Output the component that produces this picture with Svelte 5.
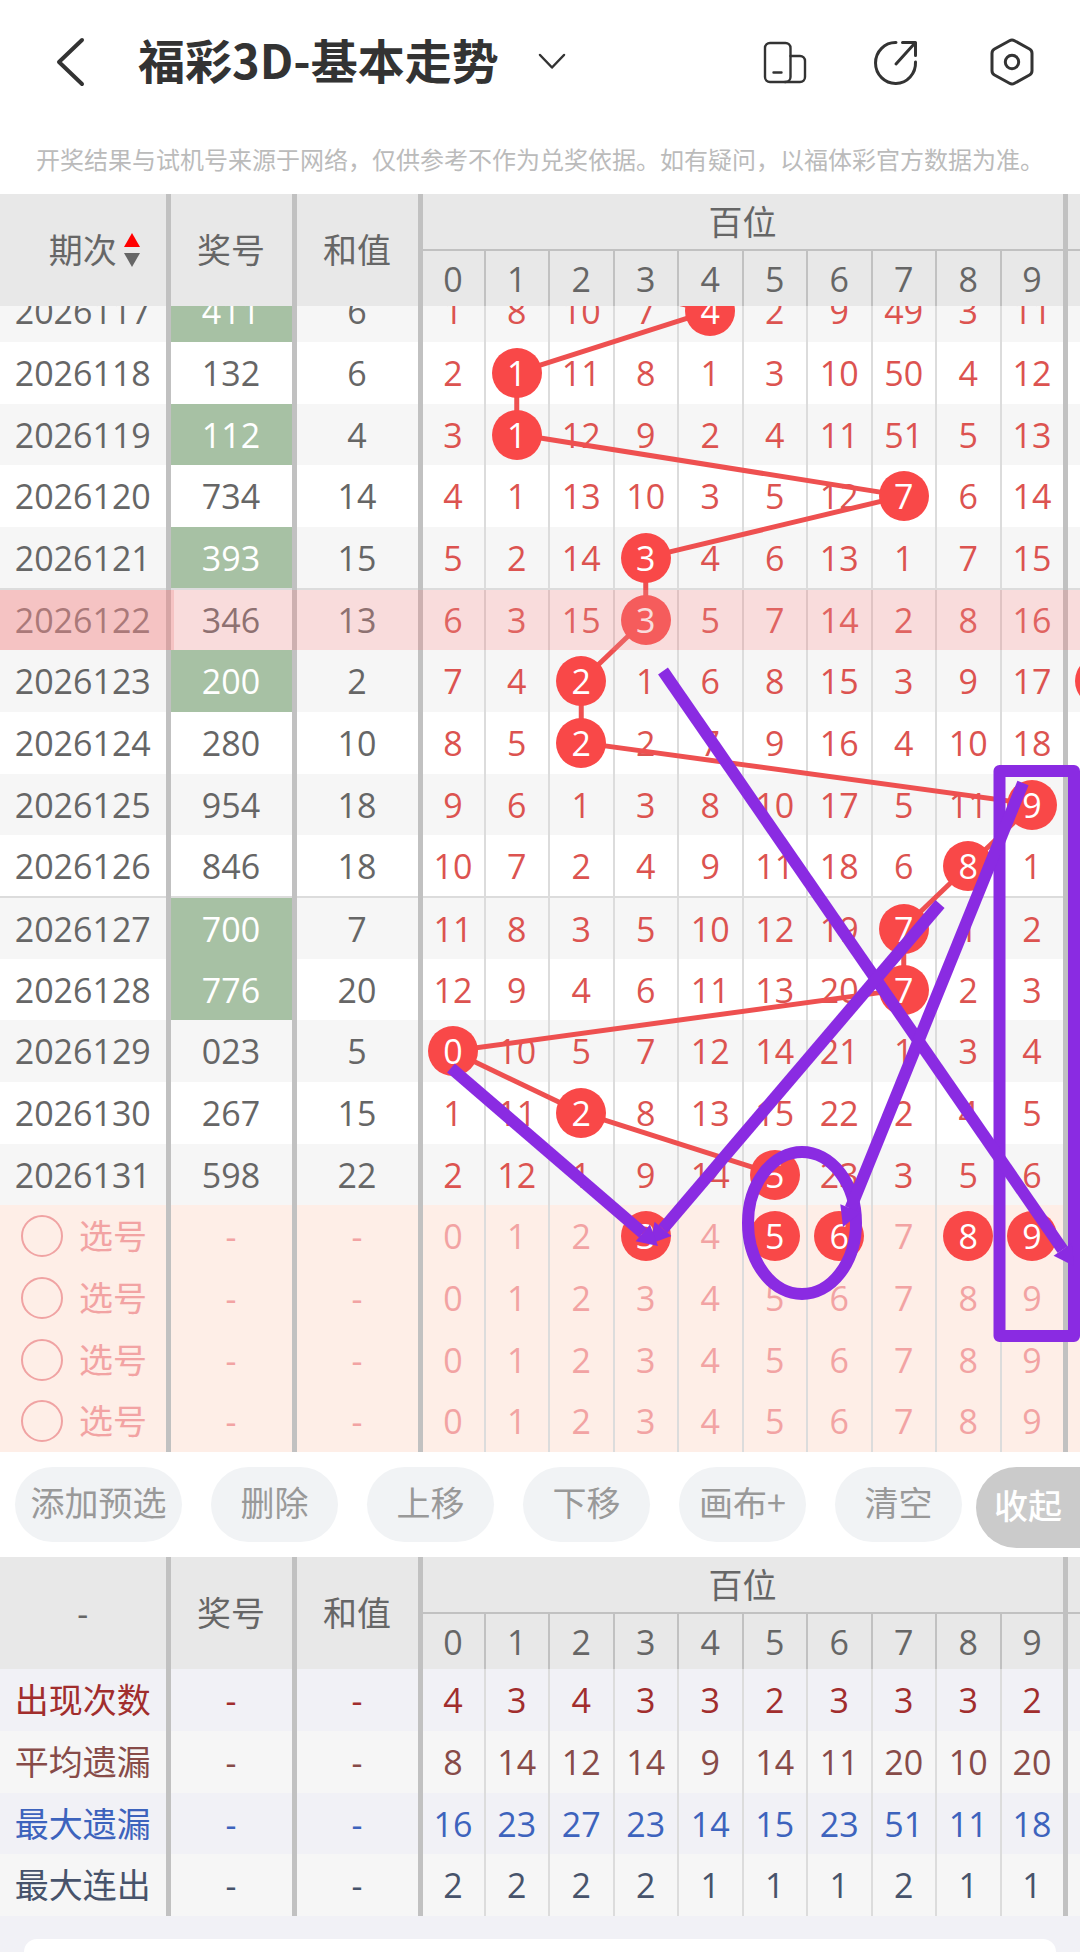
<script>
	const digits = [0, 1, 2, 3, 4, 5, 6, 7, 8, 9];

	// hit is the digit drawn, gaps the omission count of every column
	const rows = [
		{ no: "2026117", code: "411", sum: 6, hit: 4, gaps: [1, 8, 10, 7, 4, 2, 9, 49, 3, 11] },
		{ no: "2026118", code: "132", sum: 6, hit: 1, gaps: [2, 1, 11, 8, 1, 3, 10, 50, 4, 12] },
		{ no: "2026119", code: "112", sum: 4, hit: 1, gaps: [3, 1, 12, 9, 2, 4, 11, 51, 5, 13] },
		{ no: "2026120", code: "734", sum: 14, hit: 7, gaps: [4, 1, 13, 10, 3, 5, 12, 7, 6, 14] },
		{ no: "2026121", code: "393", sum: 15, hit: 3, gaps: [5, 2, 14, 3, 4, 6, 13, 1, 7, 15] },
		{ no: "2026122", code: "346", sum: 13, hit: 3, gaps: [6, 3, 15, 3, 5, 7, 14, 2, 8, 16] },
		{ no: "2026123", code: "200", sum: 2, hit: 2, gaps: [7, 4, 2, 1, 6, 8, 15, 3, 9, 17] },
		{ no: "2026124", code: "280", sum: 10, hit: 2, gaps: [8, 5, 2, 2, 7, 9, 16, 4, 10, 18] },
		{ no: "2026125", code: "954", sum: 18, hit: 9, gaps: [9, 6, 1, 3, 8, 10, 17, 5, 11, 9] },
		{ no: "2026126", code: "846", sum: 18, hit: 8, gaps: [10, 7, 2, 4, 9, 11, 18, 6, 8, 1] },
		{ no: "2026127", code: "700", sum: 7, hit: 7, gaps: [11, 8, 3, 5, 10, 12, 19, 7, 1, 2] },
		{ no: "2026128", code: "776", sum: 20, hit: 7, gaps: [12, 9, 4, 6, 11, 13, 20, 7, 2, 3] },
		{ no: "2026129", code: "023", sum: 5, hit: 0, gaps: [0, 10, 5, 7, 12, 14, 21, 1, 3, 4] },
		{ no: "2026130", code: "267", sum: 15, hit: 2, gaps: [1, 11, 2, 8, 13, 15, 22, 2, 4, 5] },
		{ no: "2026131", code: "598", sum: 22, hit: 5, gaps: [2, 12, 1, 9, 14, 5, 23, 3, 5, 6] },
	];

	const stats = [
		{ name: "出现次数", kind: "count", values: [4, 3, 4, 3, 3, 2, 3, 3, 3, 2] },
		{ name: "平均遗漏", kind: "mean", values: [8, 14, 12, 14, 9, 14, 11, 20, 10, 20] },
		{ name: "最大遗漏", kind: "max", values: [16, 23, 27, 23, 14, 15, 23, 51, 11, 18] },
		{ name: "最大连出", kind: "streak", values: [2, 2, 2, 2, 1, 1, 1, 2, 1, 1] },
	];

	const tools = ["删除", "上移", "下移", "画布+", "清空"];

	let picks = [[3, 5, 6, 8, 9], [], [], []];
	let marked = "2026122";

	const total = rows.length + picks.length;
	// the issue above the first row ended on 0
	const trail = [0, ...rows.map((r) => r.hit)];
	const px = (d) => (d + 0.5) * 10 + "%";
	const py = (i) => ((i + 0.5) / total) * 100 + "%";

	const hasPair = (code) => new Set(code).size < 3;

	function toggle(i, d) {
		picks[i] = picks[i].includes(d) ? picks[i].filter((x) => x !== d) : [...picks[i], d];
	}

	const arrows = [
		{ from: [663, 365], to: [1074, 960] },
		{ from: [940, 598], to: [650, 938] },
		{ from: [1023, 477], to: [843, 921] },
		{ from: [451, 762], to: [658, 940] },
	].map(({ from, to }) => {
		const len = Math.hypot(to[0] - from[0], to[1] - from[1]);
		const ux = (to[0] - from[0]) / len;
		const uy = (to[1] - from[1]) / len;
		const bx = to[0] - ux * 20;
		const by = to[1] - uy * 20;
		return {
			from,
			base: [bx, by],
			head: `${to[0]},${to[1]} ${bx - uy * 11},${by + ux * 11} ${bx + uy * 11},${by - ux * 11}`,
		};
	});
</script>

{#snippet cols()}
	<colgroup>
		<col class="c-no" />
		<col class="c-side" />
		<col class="c-side" />
		{#each digits as d}<col />{/each}
		<col class="c-next" />
	</colgroup>
{/snippet}

{#snippet head(sortable)}
	<thead>
		<tr>
			<th rowspan="2" class="thick">
				{#if sortable}
					<button class="sort">
						期次
						<svg width="16" height="34" viewBox="0 0 16 34" aria-hidden="true">
							<path d="M8 0 16 14H0z" fill="#f00" />
							<path d="M0 20H16L8 34z" fill="#666" />
						</svg>
					</button>
				{:else}
					-
				{/if}
			</th>
			<th rowspan="2" class="thick">奖号</th>
			<th rowspan="2" class="thick">和值</th>
			<th colspan="10" class="thick group">百位</th>
			<th class="group"></th>
		</tr>
		<tr>
			{#each digits as d}<th class="digit">{d}</th>{/each}
			<th></th>
		</tr>
	</thead>
{/snippet}

<div class="page">
	<header>
		<button class="icon back" aria-label="返回">
			<svg width="32" height="52" viewBox="0 0 32 52">
				<path d="M26 4 3 26 26 48" stroke-width="4" />
			</svg>
		</button>
		<h1>福彩3D-基本走势</h1>
		<button class="icon more" aria-label="切换">
			<svg width="30" height="20" viewBox="0 0 30 20">
				<path d="M3 3 15 15.500 27 3" stroke-width="2.500" />
			</svg>
		</button>
		<div class="actions">
			<button class="icon" aria-label="分屏">
				<svg width="48" height="48" viewBox="0 0 48 48" stroke-width="2.400">
					<rect x="5" y="5" width="25.500" height="39" rx="5" />
					<path d="M30.500 18h9.500a5 5 0 0 1 5 5v16a5 5 0 0 1-5 5H25M13.500 34.500h8" />
				</svg>
			</button>
			<button class="icon" aria-label="分享">
				<svg width="48" height="48" viewBox="3 0 48 48" stroke-width="3">
					<path d="M25 4.500A20 20.500 0 1 0 44.500 24M25 26 44 5M31.500 4.500H44.500V17.500" />
				</svg>
			</button>
			<button class="icon" aria-label="设置">
				<svg width="48" height="48" viewBox="0 0 48 48" stroke-width="3">
					<path d="M21.500 2.700q2.500-1.400 5 0L41.500 11q2.500 1.400 2.500 4.200v17.600q0 2.800-2.500 4.200L26.500 45.300q-2.500 1.400-5 0L6.500 37Q4 35.600 4 32.800V15.200Q4 12.400 6.500 11z" />
					<circle cx="24" cy="24" r="6.700" />
				</svg>
			</button>
		</div>
	</header>
	<p class="notice">开奖结果与试机号来源于网络，仅供参考不作为兑奖依据。如有疑问，以福体彩官方数据为准。</p>

	<table>
		{@render cols()}
		{@render head(true)}
	</table>

	<div class="board">
		<div class="sheet">
			<table class="trend">
				{@render cols()}
				<tbody>
					{#each rows as row, i}
						<tr class:marked={row.no === marked} class:split={i > 0 && i % 5 === 0}>
							<td class="thick no">{row.no}</td>
							<td class="thick" class:pair={hasPair(row.code)}>{row.code}</td>
							<td class="thick">{row.sum}</td>
							{#each row.gaps as gap, d}
								<td class="digit">
									{#if d === row.hit}<span class="ball">{gap}</span>{:else}{gap}{/if}
								</td>
							{/each}
							<td class="next">{#if row.no === "2026123"}<span class="ball"></span>{/if}</td>
						</tr>
					{/each}
					{#each picks as pick, i}
						<tr class="pick">
							<td class="thick">
								<label><input type="radio" name="pick" />选号</label>
							</td>
							<td class="thick">-</td>
							<td class="thick">-</td>
							{#each digits as d}
								<td class="digit">
									<button class:ball={pick.includes(d)} on:click={() => toggle(i, d)}>{d}</button>
								</td>
							{/each}
							<td></td>
						</tr>
					{/each}
				</tbody>
			</table>
			<svg class="trail" aria-hidden="true">
				{#each trail.slice(1) as d, i}
					<line x1={px(trail[i])} y1={py(i - 1)} x2={px(d)} y2={py(i)} />
				{/each}
			</svg>
		</div>
		<svg class="canvas" viewBox="0 0 1080 1146" preserveAspectRatio="none" aria-hidden="true">
			<rect x="999.500" y="465" width="74.500" height="565" />
			<ellipse cx="802" cy="917" rx="54" ry="71" />
			{#each arrows as a}
				<line x1={a.from[0]} y1={a.from[1]} x2={a.base[0]} y2={a.base[1]} />
				<polygon points={a.head} />
			{/each}
		</svg>
	</div>

	<div class="bar">
		<div class="tools">
			<button class="tool wide">添加预选</button>
			{#each tools as tool}
				<button class="tool">{tool}</button>
			{/each}
		</div>
		<button class="fold">收起</button>
	</div>

	<table class="stats">
		{@render cols()}
		{@render head(false)}
		<tbody>
			{#each stats as stat}
				<tr class={stat.kind}>
					<td class="thick">{stat.name}</td>
					<td class="thick">-</td>
					<td class="thick">-</td>
					{#each stat.values as value}<td class="digit">{value}</td>{/each}
					<td></td>
				</tr>
			{/each}
		</tbody>
	</table>

	<div class="bottom"></div>
</div>

<style>
	:global(body) {
		background: #f1f1f6;
	}
	.page {
		display: flex;
		flex-direction: column;
		min-height: 100vh;
		overflow: hidden;
		font-family: "Open Sans", "Noto Sans CJK SC", sans-serif;
		font-size: 34px;
		line-height: 50px;
		color: #666;
	}
	button {
		padding: 0;
		border: 0;
		background: none;
		font: inherit;
		color: inherit;
		cursor: pointer;
	}

	header {
		display: flex;
		align-items: center;
		height: 124px;
		padding: 0 44px 0 56px;
		background: #fff;
		color: #333;
	}
	h1 {
		margin: 0;
		padding-bottom: 6px;
		font-family: "Noto Sans CJK SC", sans-serif;
		font-size: 47px;
		font-weight: 700;
	}
	.icon {
		display: flex;
	}
	.icon svg {
		fill: none;
		stroke: #333;
		stroke-linecap: round;
		stroke-linejoin: round;
	}
	.back {
		margin-right: 50px;
	}
	.more {
		margin-left: 38px;
	}
	.actions {
		display: flex;
		gap: 66px;
		margin-left: auto;
	}
	.notice {
		margin: 0;
		background: #fff;
		color: #bbb;
		font-family: "Noto Sans CJK SC", sans-serif;
		font-size: 24px;
		line-height: 70px;
		text-align: center;
		white-space: nowrap;
	}

	table {
		width: 100%;
		table-layout: fixed;
		border-collapse: collapse;
	}
	.c-no {
		width: 168px;
	}
	.c-side {
		width: 126px;
	}
	.c-next {
		width: 15px;
	}
	th,
	td {
		padding: 0;
		font-weight: 400;
		text-align: center;
		white-space: nowrap;
	}
	.thick {
		border-right: 5px solid #c1c1c1;
	}
	.digit {
		border-right: 2px solid #dcdcdc;
	}
	.digit:nth-last-child(2) {
		border-right: 5px solid #c1c1c1;
	}
	thead tr {
		height: 56px;
		background: #e8e8e8;
	}
	th.group {
		border-bottom: 2px solid #c1c1c1;
	}
	th.digit {
		border-right-color: #c1c1c1;
	}
	.sort {
		display: inline-flex;
		align-items: center;
		gap: 7px;
	}
	.sort svg {
		margin-right: -23px;
	}

	tbody tr {
		height: 62px;
	}
	tbody tr:nth-child(3n) {
		height: 61px;
	}

	.board {
		position: relative;
		overflow: hidden;
		isolation: isolate;
	}
	/* scrolled so that the first row is half under the header */
	.sheet {
		position: relative;
		margin-top: -26px;
	}
	.trend tr {
		background: #fff;
	}
	.trend tr:nth-child(odd) {
		background: #f6f6f6;
	}
	.trend .digit {
		color: #dc5350;
	}
	.trend .pair {
		background: #a7c1a4;
		color: #fff;
	}
	.trend tr.split td {
		border-top: 2px solid #dcdcdc;
	}
	.ball {
		position: relative;
		z-index: 2;
		display: block;
		width: 50px;
		height: 50px;
		margin: 0 auto;
		border-radius: 50%;
		background: #f94848;
		color: #fff;
	}
	.next .ball {
		margin: 0 0 0 7px;
	}
	/* the tint runs over the column borders as well */
	.marked td {
		position: relative;
	}
	.marked td::after,
	.marked .no::before {
		content: "";
		position: absolute;
		z-index: 3;
		inset: 0 -2px 0 0;
		background: rgba(235, 138, 138, 0.3);
	}
	.marked .thick::after,
	.marked .digit:nth-last-child(2)::after {
		right: -5px;
	}
	.marked .no::before {
		right: -8px;
	}

	.trend tr.pick {
		background: #feeee7;
		color: #f2a3a3;
	}
	.pick .digit {
		color: #f2a3a3;
	}
	.pick .digit button {
		display: block;
		width: 50px;
		margin: 0 auto;
	}
	.pick .digit .ball {
		color: #fff;
	}
	label {
		display: flex;
		align-items: center;
		gap: 16px;
		padding-left: 21px;
	}
	input {
		appearance: none;
		width: 42px;
		height: 42px;
		margin: 0;
		border: 2px solid #f0a3a3;
		border-radius: 50%;
	}
	input:checked {
		background: #f0a3a3;
	}

	.trail {
		position: absolute;
		z-index: 1;
		top: 0;
		left: 420px;
		width: calc(100% - 435px);
		height: 100%;
		overflow: visible;
		pointer-events: none;
		stroke: #ee5050;
		stroke-width: 5px;
	}
	.canvas {
		position: absolute;
		z-index: 4;
		inset: 0;
		width: 100%;
		height: 100%;
		pointer-events: none;
		fill: none;
		stroke: #8a2be2;
		stroke-width: 12px;
		stroke-linejoin: round;
	}
	.canvas polygon {
		fill: #8a2be2;
		stroke: none;
	}

	.bar {
		display: flex;
		align-items: flex-start;
		justify-content: space-between;
		height: 90px;
		padding: 15px 0 0 15px;
		background: #fff;
		font-family: "Noto Sans CJK SC", sans-serif;
	}
	.tools {
		display: flex;
		gap: 29px;
	}
	.tool {
		flex: none;
		width: 127px;
		height: 75px;
		padding-bottom: 6px;
		border-radius: 38px;
		background: #f1f3f5;
		color: #999;
	}
	.tool.wide {
		width: 167px;
	}
	.fold {
		flex: none;
		height: 81px;
		padding: 0 18px 6px;
		border-radius: 41px 0 0 41px;
		background: #cbcbcb;
		color: #fff;
		font-weight: 500;
	}

	.stats tbody tr {
		background: #f6f6f6;
	}
	.stats tbody tr:nth-child(odd) {
		background: #f1f1f6;
	}
	.stats .count {
		color: #a12d2d;
	}
	.stats .mean {
		color: #874b48;
	}
	.stats .max {
		color: #3d63bd;
	}
	.stats .streak {
		color: #47536b;
	}

	.bottom {
		flex: 1;
		margin: 23px 24px 0;
		border-radius: 16px 16px 0 0;
		background: #fff;
	}
</style>
